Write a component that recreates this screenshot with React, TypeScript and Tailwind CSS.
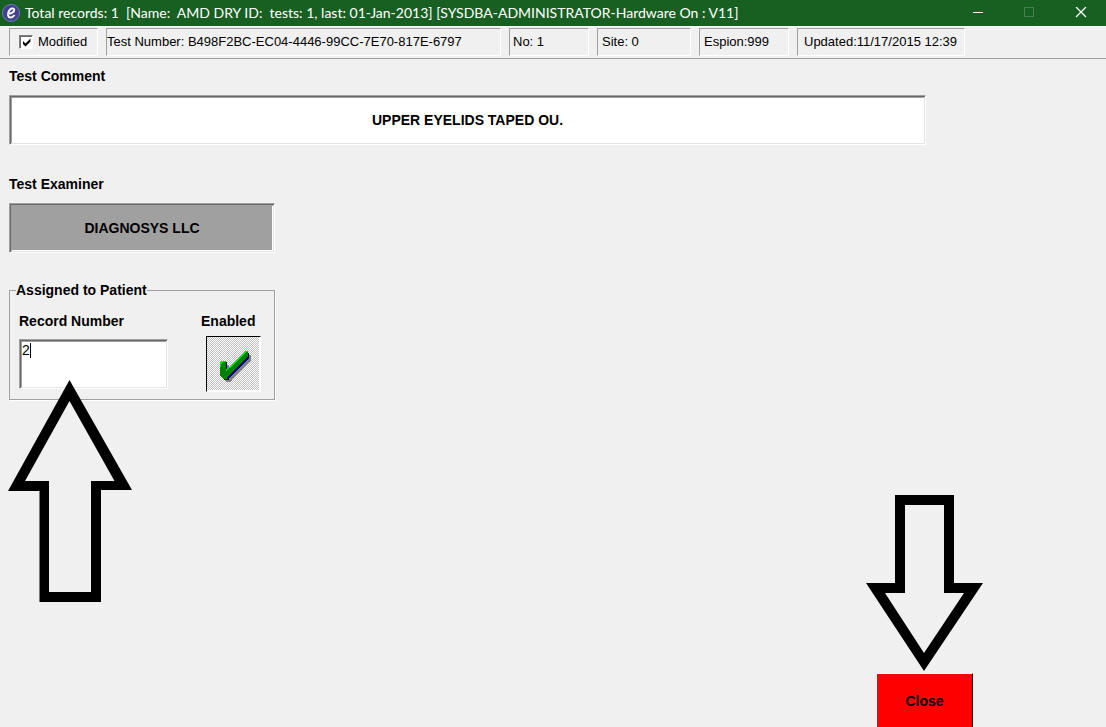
import type { ReactNode } from 'react';

// Two-tone sunken edge shared by the edit boxes
const sunken =
  'border border-t-[#a0a0a0] border-r-white border-b-white border-l-[#a0a0a0] shadow-[inset_1px_1px_#696969,inset_-1px_-1px_#e3e3e3,inset_2px_2px_#a0a0a0,inset_-2px_-2px_#fff] outline-none';

function StatusPanel({ className, children }: { className: string; children: ReactNode }) {
  return (
    <div
      className={`flex h-7 shrink-0 items-center overflow-hidden whitespace-nowrap border border-t-[#a0a0a0] border-r-white border-b-white border-l-[#a0a0a0] text-[13px] ${className}`}
    >
      {children}
    </div>
  );
}

function AppLogo() {
  return (
    <svg className="h-[18px] w-[18px]" viewBox="0 0 18 18" aria-hidden="true">
      <circle cx="9" cy="9" r="8.5" fill="#3f4290" stroke="#7779b4" />
      <path
        d="M5.500 10C9 9.800 12.600 8 12.200 5.600C11.800 3.700 8.400 4 6.800 7.200C5.300 10.400 5.800 13.400 8.400 13.400C10.200 13.400 11.600 12.400 12.600 11"
        fill="none"
        stroke="#f4f4fa"
        strokeWidth="2"
      />
    </svg>
  );
}

function TitleBar() {
  return (
    <header className="flex h-[27px] items-center border-b border-white bg-[#186022] pl-0.5 text-white">
      <AppLogo />
      <h1 className="ml-[5px] grow whitespace-pre font-[Lato,sans-serif] text-[14px] leading-5">
        {'Total records: 1  [Name:  AMD DRY ID:  tests: 1, last: 01-Jan-2013] [SYSDBA-ADMINISTRATOR-Hardware On : V11]'}
      </h1>
      <div className="flex">
        <button type="button" aria-label="Minimize" className="flex h-6 w-[51px] items-center justify-center">
          <svg className="h-3 w-3" viewBox="0 0 12 12">
            <path d="M0 5.500H10" stroke="#fff" />
          </svg>
        </button>
        <button type="button" aria-label="Maximize" disabled className="flex h-6 w-[51px] items-center justify-center">
          <svg className="h-3 w-3" viewBox="0 0 12 12">
            <path d="M0.500 0.500H9.500V9.500H0.500Z" fill="none" stroke="#46804e" />
          </svg>
        </button>
        <button type="button" aria-label="Close window" className="flex h-6 w-[51px] items-center justify-center">
          <svg className="h-3 w-3" viewBox="0 0 12 12">
            <path d="M1 0L11 10M11 0L1 10" stroke="#fff" strokeWidth="1.3" />
          </svg>
        </button>
      </div>
    </header>
  );
}

function StatusBar() {
  return (
    <div className="flex h-8 items-start gap-2 overflow-hidden border-b border-[#a0a0a0] pt-px pl-[9px]">
      <StatusPanel className="w-[89px] pl-[9px]">
        <label className="flex items-center gap-[5px]">
          <input type="checkbox" defaultChecked className="peer sr-only" />
          <span className="flex h-[14px] w-[14px] items-center justify-center border border-t-[#808080] border-r-white border-b-white border-l-[#808080] bg-white text-transparent shadow-[inset_1px_1px_#696969] peer-checked:text-black">
            <svg className="h-[9px] w-[9px]" viewBox="0 0 9 9" aria-hidden="true">
              <path d="M1 3V6L3.500 8.500L8.500 3.500V0.500L3.500 5.500Z" fill="currentColor" />
            </svg>
          </span>
          Modified
        </label>
      </StatusPanel>
      <StatusPanel className="w-[395px]">Test Number: B498F2BC-EC04-4446-99CC-7E70-817E-6797</StatusPanel>
      <StatusPanel className="w-20 pl-[3px]">No: 1</StatusPanel>
      <StatusPanel className="w-[94px] pl-1">Site: 0</StatusPanel>
      <StatusPanel className="w-[90px] pl-1">Espion:999</StatusPanel>
      <StatusPanel className="w-[168px] pl-1.5">Updated:11/17/2015 12:39</StatusPanel>
    </div>
  );
}

function GreenCheck() {
  return (
    <svg className="h-8 w-8" viewBox="0 0 32 32" shapeRendering="crispEdges" aria-hidden="true">
      <path d="M5 15H9V22L27 5H31V10L12 30L10 32H6L5 30Z" fill="#808080" />
      <path d="M2 12H7V20L26 3H29V8L9 28V30H4L2 28Z" fill="#000080" />
      <path d="M0 12L2 11H6V19H8L25 3V1H28V6L7 27V29H3L0 26Z" fill="#008000" />
      <path d="M0 17V12L2 11H6V12H3L1 14V17ZM6 19L8 18L24 3V2L26 1H28V2H26L10 18L6 21Z" fill="#00e000" />
    </svg>
  );
}

function UpArrow({ className }: { className: string }) {
  return (
    <svg className={`h-[222px] w-[124px] ${className}`} viewBox="0 0 124 222" aria-hidden="true">
      <path
        fillRule="evenodd"
        d="M61.500 0L124 110H93V222H31.500V111H0ZM61.500 21L17 101H41V212H83V101H106.500Z"
      />
    </svg>
  );
}

function DownArrow() {
  return (
    <svg className="h-[176px] w-[117px]" viewBox="0 0 117 176" aria-hidden="true">
      <path
        fillRule="evenodd"
        d="M29 0H88V88H117L58 176L0 88H29ZM39 10V98H19L58 158L98 98H78V10Z"
      />
    </svg>
  );
}

export default function App() {
  return (
    <div className="flex min-h-screen flex-col bg-[#f0f0f0] font-['Liberation_Sans',Arial,sans-serif] text-[14px] leading-4 text-black">
      <TitleBar />
      <StatusBar />

      <main className="flex flex-col items-start pl-[9px] pt-[9px] font-bold">
        <label htmlFor="comment">Test Comment</label>
        <div className="w-full pr-[180px]">
          <input
            id="comment"
            defaultValue="UPPER EYELIDS TAPED OU."
            className={`mt-[11px] block h-[50px] w-full bg-white text-center ${sunken}`}
          />
        </div>

        <label htmlFor="examiner" className="mt-[31px]">Test Examiner</label>
        <input
          id="examiner"
          defaultValue="DIAGNOSYS LLC"
          className={`mt-[11px] block h-[50px] w-[266px] bg-[#a0a0a0] text-center ${sunken}`}
        />

        <div className="relative mt-[29px]">
          <fieldset className="h-[118px] w-[266px] border border-[#a0a0a0] pl-[9px] shadow-[1px_1px_#fff]">
            <legend className="-ml-[3px]">Assigned to Patient</legend>
            <div className="flex pt-[15px]">
              <div className="w-[182px]">
                <label htmlFor="record">Record Number</label>
                <div className="relative mt-2.5">
                  <textarea
                    id="record"
                    defaultValue="2"
                    className={`block h-[50px] w-[149px] resize-none bg-white pl-0.5 pt-0.5 font-normal ${sunken}`}
                  />
                  {/* text caret */}
                  <span className="pointer-events-none absolute left-[11px] top-1 h-[15px] w-px bg-black" />
                </div>
              </div>
              <div>
                <span id="enabled">Enabled</span>
                <button
                  type="button"
                  aria-labelledby="enabled"
                  aria-pressed="true"
                  className="ml-[5px] mt-[7px] flex h-14 w-[55px] items-center justify-center border border-t-black border-r-white border-b-white border-l-black bg-[repeating-conic-gradient(#c0c0c0_0_25%,#fff_0_50%)] bg-[length:2px_2px] pl-1 pt-1 shadow-[inset_-1px_-1px_#fff]"
                >
                  <GreenCheck />
                </button>
              </div>
            </div>
          </fieldset>
          <UpArrow className="pointer-events-none absolute -left-px top-[98px]" />
        </div>
      </main>

      <footer className="mt-auto flex justify-end pr-[123px]">
        <div className="flex flex-col items-center gap-0.5">
          <DownArrow />
          <button
            type="button"
            className="h-[54px] w-[97px] border border-b-0 border-t-white border-r-black border-l-white bg-[#ff0000] font-bold"
          >
            Close
          </button>
        </div>
      </footer>
    </div>
  );
}
